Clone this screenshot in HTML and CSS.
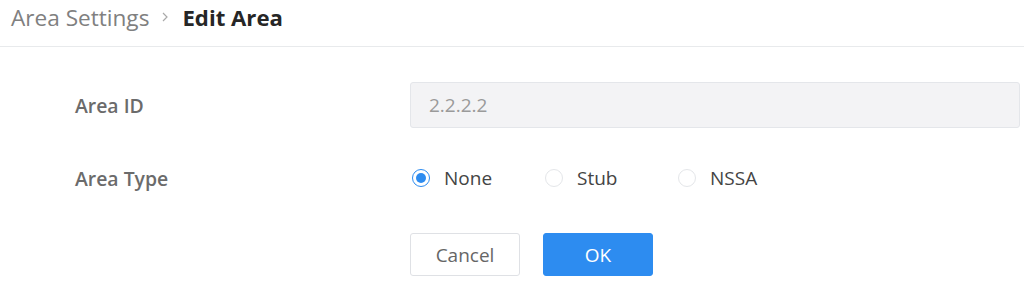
FILE: index.html
```html
<!DOCTYPE html>
<html>
<head>
<meta charset="utf-8">
<link rel="stylesheet" href="styles.css">
</head>
<body>
<div class="header">
  <span class="crumb">Area Settings</span>
  <svg class="sep" width="10" height="12" viewBox="0 0 10 12"><path d="M3 2 L7 6 L3 10" fill="none" stroke="#aaa" stroke-width="1.2"/></svg>
  <span class="current">Edit Area</span>
</div>
<div class="form">
  <div class="row row-id">
    <div class="label">Area ID</div>
    <div class="field"><div class="input">2.2.2.2</div></div>
  </div>
  <div class="row row-type">
    <div class="label">Area Type</div>
    <div class="field radios">
      <label class="radio"><span class="dot checked"></span><span>None</span></label>
      <label class="radio"><span class="dot"></span><span>Stub</span></label>
      <label class="radio"><span class="dot"></span><span>NSSA</span></label>
    </div>
  </div>
  <div class="row row-btn">
    <div class="label"></div>
    <div class="field buttons">
      <button class="btn cancel">Cancel</button>
      <button class="btn ok">OK</button>
    </div>
  </div>
</div>
</body>
</html>
```
FILE: styles.css
```css
html, body {
  margin: 0;
  padding: 0;
  background: #fff;
  font-family: "Open Sans", "Noto Sans", sans-serif;
}
.header {
  height: 46px;
  border-bottom: 1px solid #e8eaec;
  display: flex;
  align-items: center;
  padding-left: 11px;
  box-sizing: content-box;
}
.header > * { position: relative; top: -6px; }
.crumb {
  font-size: 22.6px;
  color: #808080;
}
.sep {
  margin: 0 12px 0 11px;
}
.current {
  font-size: 22.2px;
  font-weight: 700;
  color: #262626;
}
.form {
  padding-left: 75px;
  padding-right: 4px;
}
.row {
  display: grid;
  grid-template-columns: 335px 1fr;
  align-items: center;
}
.row-id {
  margin-top: 35px;
  height: 46px;
}
.row-type {
  margin-top: 31px;
  height: 38px;
}
.row-btn {
  margin-top: 36px;
}
.label {
  font-size: 19.4px;
  font-weight: 600;
  color: #6b6b6b;
}
.input {
  height: 46px;
  box-sizing: border-box;
  border: 1px solid #e4e6ea;
  border-radius: 3px;
  background: #f3f3f5;
  font-size: 19px;
  color: #9a9a9a;
  padding-left: 18px;
  display: flex;
  align-items: center;
}
.radios {
  display: flex;
  align-items: center;
  padding-left: 2px;
}
.radio {
  width: 133px;
  display: flex;
  align-items: center;
  font-size: 19px;
  color: #444;
}
.dot {
  width: 18px;
  height: 18px;
  box-sizing: border-box;
  border-radius: 50%;
  border: 1px solid #e4e6e9;
  margin-right: 14px;
  background: #fff;
  display: flex;
  align-items: center;
  justify-content: center;
}
.dot.checked {
  border-color: #2d8cf0;
}
.dot.checked::after {
  content: "";
  width: 10px;
  height: 10px;
  border-radius: 50%;
  background: #2d8cf0;
}
.buttons {
  display: flex;
  gap: 23px;
}
.btn {
  width: 110px;
  height: 43px;
  border-radius: 3px;
  font-family: "Open Sans", "Noto Sans", sans-serif;
  font-size: 19px;
  cursor: pointer;
}
.cancel {
  background: #fff;
  border: 1px solid #dfe1e5;
  color: #666;
}
.ok {
  background: #2d8cf0;
  border: 1px solid #2d8cf0;
  color: #fff;
}
```
